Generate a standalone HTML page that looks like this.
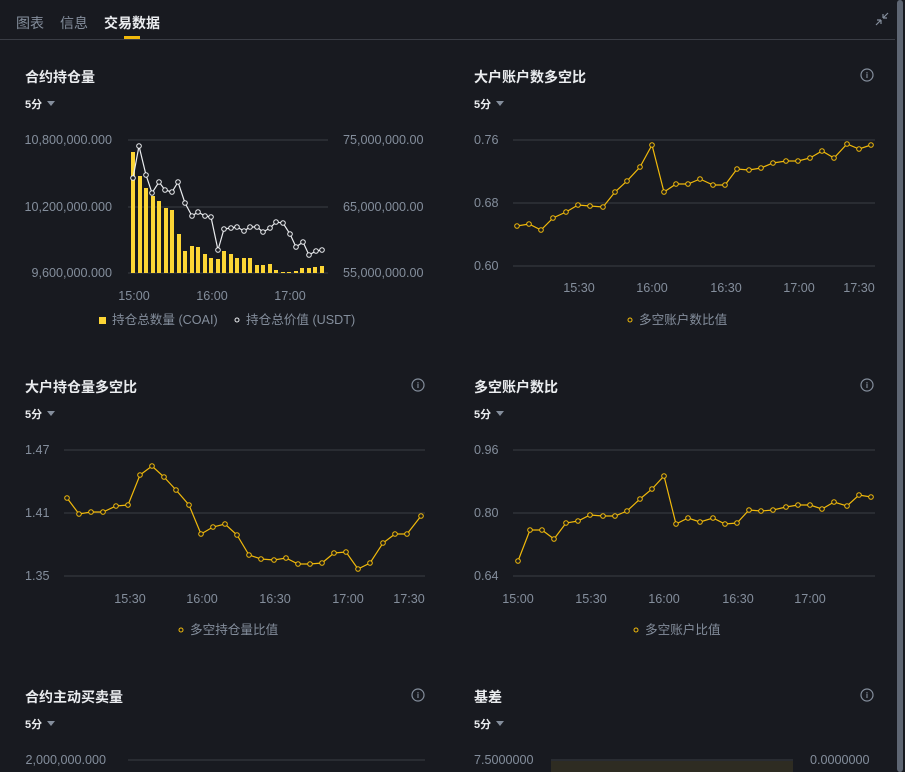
<!DOCTYPE html>
<html><head><meta charset="utf-8"><style>
body{margin:0;width:905px;height:772px;overflow:hidden;background:#181a20;font-family:"Liberation Sans","Noto Sans CJK SC",sans-serif;position:relative;color:#eaecef}
.a{position:absolute;white-space:nowrap}
.tab{top:13px;font-size:14px;color:#848e9c}
.t{font-size:14px;font-weight:bold;color:#eaecef}
.p{font-size:11px;font-weight:bold;color:#eaecef}
.p:after{content:"";display:inline-block;margin-left:5px;border:4px solid transparent;border-top:5px solid #848e9c;vertical-align:-2px}
svg{position:absolute;left:0;top:0}
</style></head><body>
<div class="a tab" style="left:16px">图表</div>
<div class="a tab" style="left:60px">信息</div>
<div class="a tab" style="left:104px;color:#eaecef;font-weight:bold">交易数据</div>
<div class="a" style="left:124px;top:36px;width:16px;height:3px;background:#f0b90b"></div>
<div class="a" style="left:0;top:39px;width:895px;height:1px;background:#3a3d45"></div>
<div class="a" style="left:897px;top:0;width:6px;height:772px;background:#5e6673;border-radius:3px"></div>

<div class="a t" style="left:25px;top:67px">合约持仓量</div>
<div class="a p" style="left:25px;top:96px">5分</div>
<div class="a t" style="left:474px;top:67px">大户账户数多空比</div>
<div class="a p" style="left:474px;top:96px">5分</div>
<div class="a t" style="left:25px;top:377px">大户持仓量多空比</div>
<div class="a p" style="left:25px;top:406px">5分</div>
<div class="a t" style="left:474px;top:377px">多空账户数比</div>
<div class="a p" style="left:474px;top:406px">5分</div>
<div class="a t" style="left:25px;top:687px">合约主动买卖量</div>
<div class="a p" style="left:25px;top:716px">5分</div>
<div class="a t" style="left:474px;top:687px">基差</div>
<div class="a p" style="left:474px;top:716px">5分</div>

<svg width="905" height="772" font-family="Liberation Sans, Noto Sans CJK SC, sans-serif" font-size="12.6" fill="#848e9c">
<g stroke="#848e9c" fill="none" stroke-width="1.2">
<circle cx="867" cy="75" r="6"/><circle cx="418" cy="385" r="6"/><circle cx="867" cy="385" r="6"/><circle cx="418" cy="695" r="6"/><circle cx="867" cy="695" r="6"/>
<path d="M876 25l5-5M881 20v4M881 20h-4M888 13l-5 5M883 18v-4M883 18h4"/>
</g>
<g fill="#848e9c" font-size="8" font-weight="bold" text-anchor="middle">
<text x="867" y="78">i</text><text x="418" y="388">i</text><text x="867" y="388">i</text><text x="418" y="698">i</text><text x="867" y="698">i</text></g>
<g stroke="#3a3d45" stroke-width="1">
<path d="M128 140H328M128 207H328M128 273H328"/>
<path d="M513 140H875M513 203H875M513 266H875"/>
<path d="M64 450H425M64 513H425M64 576H425"/>
<path d="M513 450H875M513 513H875M513 576H875"/>
<path d="M128 760H425"/><path d="M551 760H793"/>
</g>
<rect x="551" y="761" width="242" height="11" fill="#2e2c22"/>
<g text-anchor="end">
<text x="112" y="144">10,800,000.000</text><text x="112" y="211">10,200,000.000</text><text x="112" y="277">9,600,000.000</text>
<text x="106" y="764">2,000,000.000</text></g>
<text x="343" y="144">75,000,000.00</text><text x="343" y="211">65,000,000.00</text><text x="343" y="277">55,000,000.00</text>
<text x="474" y="144">0.76</text><text x="474" y="207">0.68</text><text x="474" y="270">0.60</text>
<text x="25" y="454">1.47</text><text x="25" y="517">1.41</text><text x="25" y="580">1.35</text>
<text x="474" y="454">0.96</text><text x="474" y="517">0.80</text><text x="474" y="580">0.64</text>
<text x="474" y="764">7.5000000</text><text x="810" y="764">0.0000000</text>
<g text-anchor="middle">
<text x="134" y="300">15:00</text><text x="212" y="300">16:00</text><text x="290" y="300">17:00</text>
<text x="579" y="292">15:30</text><text x="652" y="292">16:00</text><text x="726" y="292">16:30</text><text x="799" y="292">17:00</text><text x="859" y="292">17:30</text>
<text x="130" y="603">15:30</text><text x="202" y="603">16:00</text><text x="275" y="603">16:30</text><text x="348" y="603">17:00</text><text x="409" y="603">17:30</text>
<text x="518" y="603">15:00</text><text x="591" y="603">15:30</text><text x="664" y="603">16:00</text><text x="738" y="603">16:30</text><text x="810" y="603">17:00</text>
</g>
<rect x="99" y="317" width="7" height="7" fill="#fcd535"/>
<text x="112" y="324">持仓总数量 (COAI)</text>
<circle cx="237" cy="320" r="2" fill="none" stroke="#eaecef"/>
<text x="246" y="324">持仓总价值 (USDT)</text>
<circle cx="630" cy="320" r="2" fill="none" stroke="#f0b90b"/><text x="639" y="324">多空账户数比值</text>
<circle cx="181" cy="630" r="2" fill="none" stroke="#f0b90b"/><text x="190" y="634">多空持仓量比值</text>
<circle cx="636" cy="630" r="2" fill="none" stroke="#f0b90b"/><text x="645" y="634">多空账户比值</text>
<path fill="#fcd535" d="M131 152h4v121h-4zM138 176h4v97h-4zM144 188h4v85h-4zM151 196h4v77h-4zM157 201h4v72h-4zM164 208h4v65h-4zM170 210h4v63h-4zM177 234h4v39h-4zM183 251h4v22h-4zM190 246h4v27h-4zM196 247h4v26h-4zM203 254h4v19h-4zM209 258h4v15h-4zM216 259h4v14h-4zM222 251h4v22h-4zM229 254h4v19h-4zM235 258h4v15h-4zM242 258h4v15h-4zM248 258h4v15h-4zM255 265h4v8h-4zM261 265h4v8h-4zM268 264h4v9h-4zM274 270h4v3h-4zM281 272h4v1h-4zM287 272h4v1h-4zM294 271h4v2h-4zM300 268h4v5h-4zM307 268h4v5h-4zM313 267h4v6h-4zM320 266h4v7h-4z"/>
<g fill="none" stroke-width="1.2">
<polyline stroke="#eaecef" points="133,178 139,146 146,175 152,193 159,182 165,190 172,192 178,182 185,203 192,216 198,212 205,216 211,217 218,250 224,229 231,228 237,227 244,231 250,227 257,227 263,232 270,228 276,222 283,223 290,234 296,247 303,242 309,255 316,251 322,250"/>
<polyline stroke="#f0b90b" points="517,226 529,224 541,230 553,218 566,212 578,205 590,206 603,207 615,192 627,181 640,167 652,145 664,192 676,184 688,184 700,179 713,185 725,185 737,169 749,170 761,168 773,163 786,161 798,161 810,158 822,151 834,158 847,144 859,149 871,145"/>
<polyline stroke="#f0b90b" points="67,498 79,514 91,512 103,512 116,506 128,505 140,475 152,466 164,477 176,490 189,505 201,534 213,527 225,524 237,535 249,555 261,559 274,560 286,558 298,564 310,564 322,563 334,553 346,552 358,569 370,563 383,543 395,534 407,534 421,516"/>
<polyline stroke="#f0b90b" points="518,561 530,530 542,530 554,539 566,523 578,521 590,515 603,516 615,516 627,511 640,499 652,489 664,476 676,524 688,518 700,522 713,518 725,524 737,523 749,510 761,511 773,510 786,507 798,505 810,505 822,509 834,502 847,506 859,495 871,497"/>
</g>
<g id="dots"></g>
</svg>
<script>
var s=document.querySelectorAll('polyline'),g=document.getElementById('dots'),ns='http://www.w3.org/2000/svg';
s.forEach(function(p){var c=p.getAttribute('stroke');p.getAttribute('points').split(' ').forEach(function(q){var a=q.split(','),e=document.createElementNS(ns,'circle');e.setAttribute('cx',a[0]);e.setAttribute('cy',a[1]);e.setAttribute('r','2.3');e.setAttribute('fill','#181a20');e.setAttribute('stroke',c);e.setAttribute('stroke-width','1');g.appendChild(e);});});
</script>
</body></html>
